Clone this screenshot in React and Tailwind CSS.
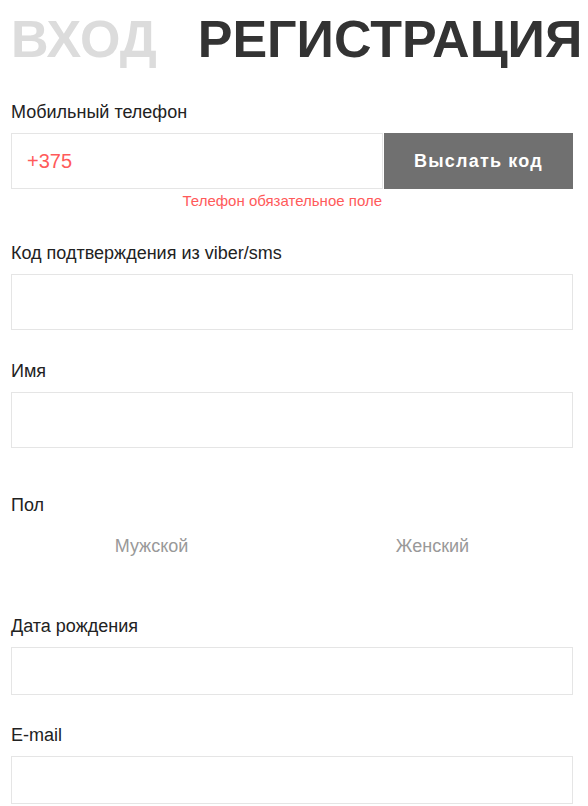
import { useState } from 'react';

const font = { fontFamily: '"Liberation Sans", Arial, sans-serif' };

function Field({ label, className = '', inputClass = 'h-[56px]' }) {
  return (
    <div className={className}>
      <label className="block text-[18px] leading-[24px] text-[#222]">{label}</label>
      <input
        type="text"
        className={`mt-[9px] block w-full border border-[#e5e5e5] bg-white px-[15px] text-[18px] outline-none ${inputClass}`}
      />
    </div>
  );
}

export default function App() {
  const [phone, setPhone] = useState('+375');
  const [gender, setGender] = useState(null);

  return (
    <div className="min-h-screen bg-white" style={font}>
      <div className="ml-[11px] w-[562px] pt-[13px]">
        <div className="flex items-start gap-[41px] whitespace-nowrap text-[52px] font-bold leading-[52px]">
          <button className="text-[#dcdcdc]">ВХОД</button>
          <button className="text-[#333333]">РЕГИСТРАЦИЯ</button>
        </div>

        <div className="mt-[35px]">
          <label className="block text-[18px] leading-[24px] text-[#222]">Мобильный телефон</label>
          <div className="mt-[9px] flex gap-px">
            <div className="flex-1">
              <input
                type="text"
                value={phone}
                onChange={(e) => setPhone(e.target.value)}
                className="block h-[56px] w-full border border-[#e5e5e5] bg-white px-[15px] text-[20px] text-[#ff5a5a] outline-none"
              />
              <p className="mt-[2px] pr-px text-right text-[15px] leading-[20px] text-[#ff5a5a]">
                Телефон обязательное поле
              </p>
            </div>
            <button className="h-[56px] w-[189px] bg-[#707070] text-[18px] font-bold tracking-[1.2px] text-white">
              Выслать код
            </button>
          </div>
        </div>

        <Field label="Код подтверждения из viber/sms" className="mt-[30px]" />
        <Field label="Имя" className="mt-[29px]" />

        <div className="mt-[45px]">
          <label className="block text-[18px] leading-[24px] text-[#222]">Пол</label>
          <div className="mt-[17px] grid grid-cols-2">
            {['Мужской', 'Женский'].map((g) => (
              <button
                key={g}
                onClick={() => setGender(g)}
                className={`text-center text-[18px] leading-[24px] ${gender === g ? 'text-[#333]' : 'text-[#999999]'}`}
              >
                {g}
              </button>
            ))}
          </div>
        </div>

        <Field label="Дата рождения" className="mt-[56px]" inputClass="h-[48px]" />
        <Field label="E-mail" className="mt-[28px]" inputClass="h-[48px]" />
      </div>
    </div>
  );
}
